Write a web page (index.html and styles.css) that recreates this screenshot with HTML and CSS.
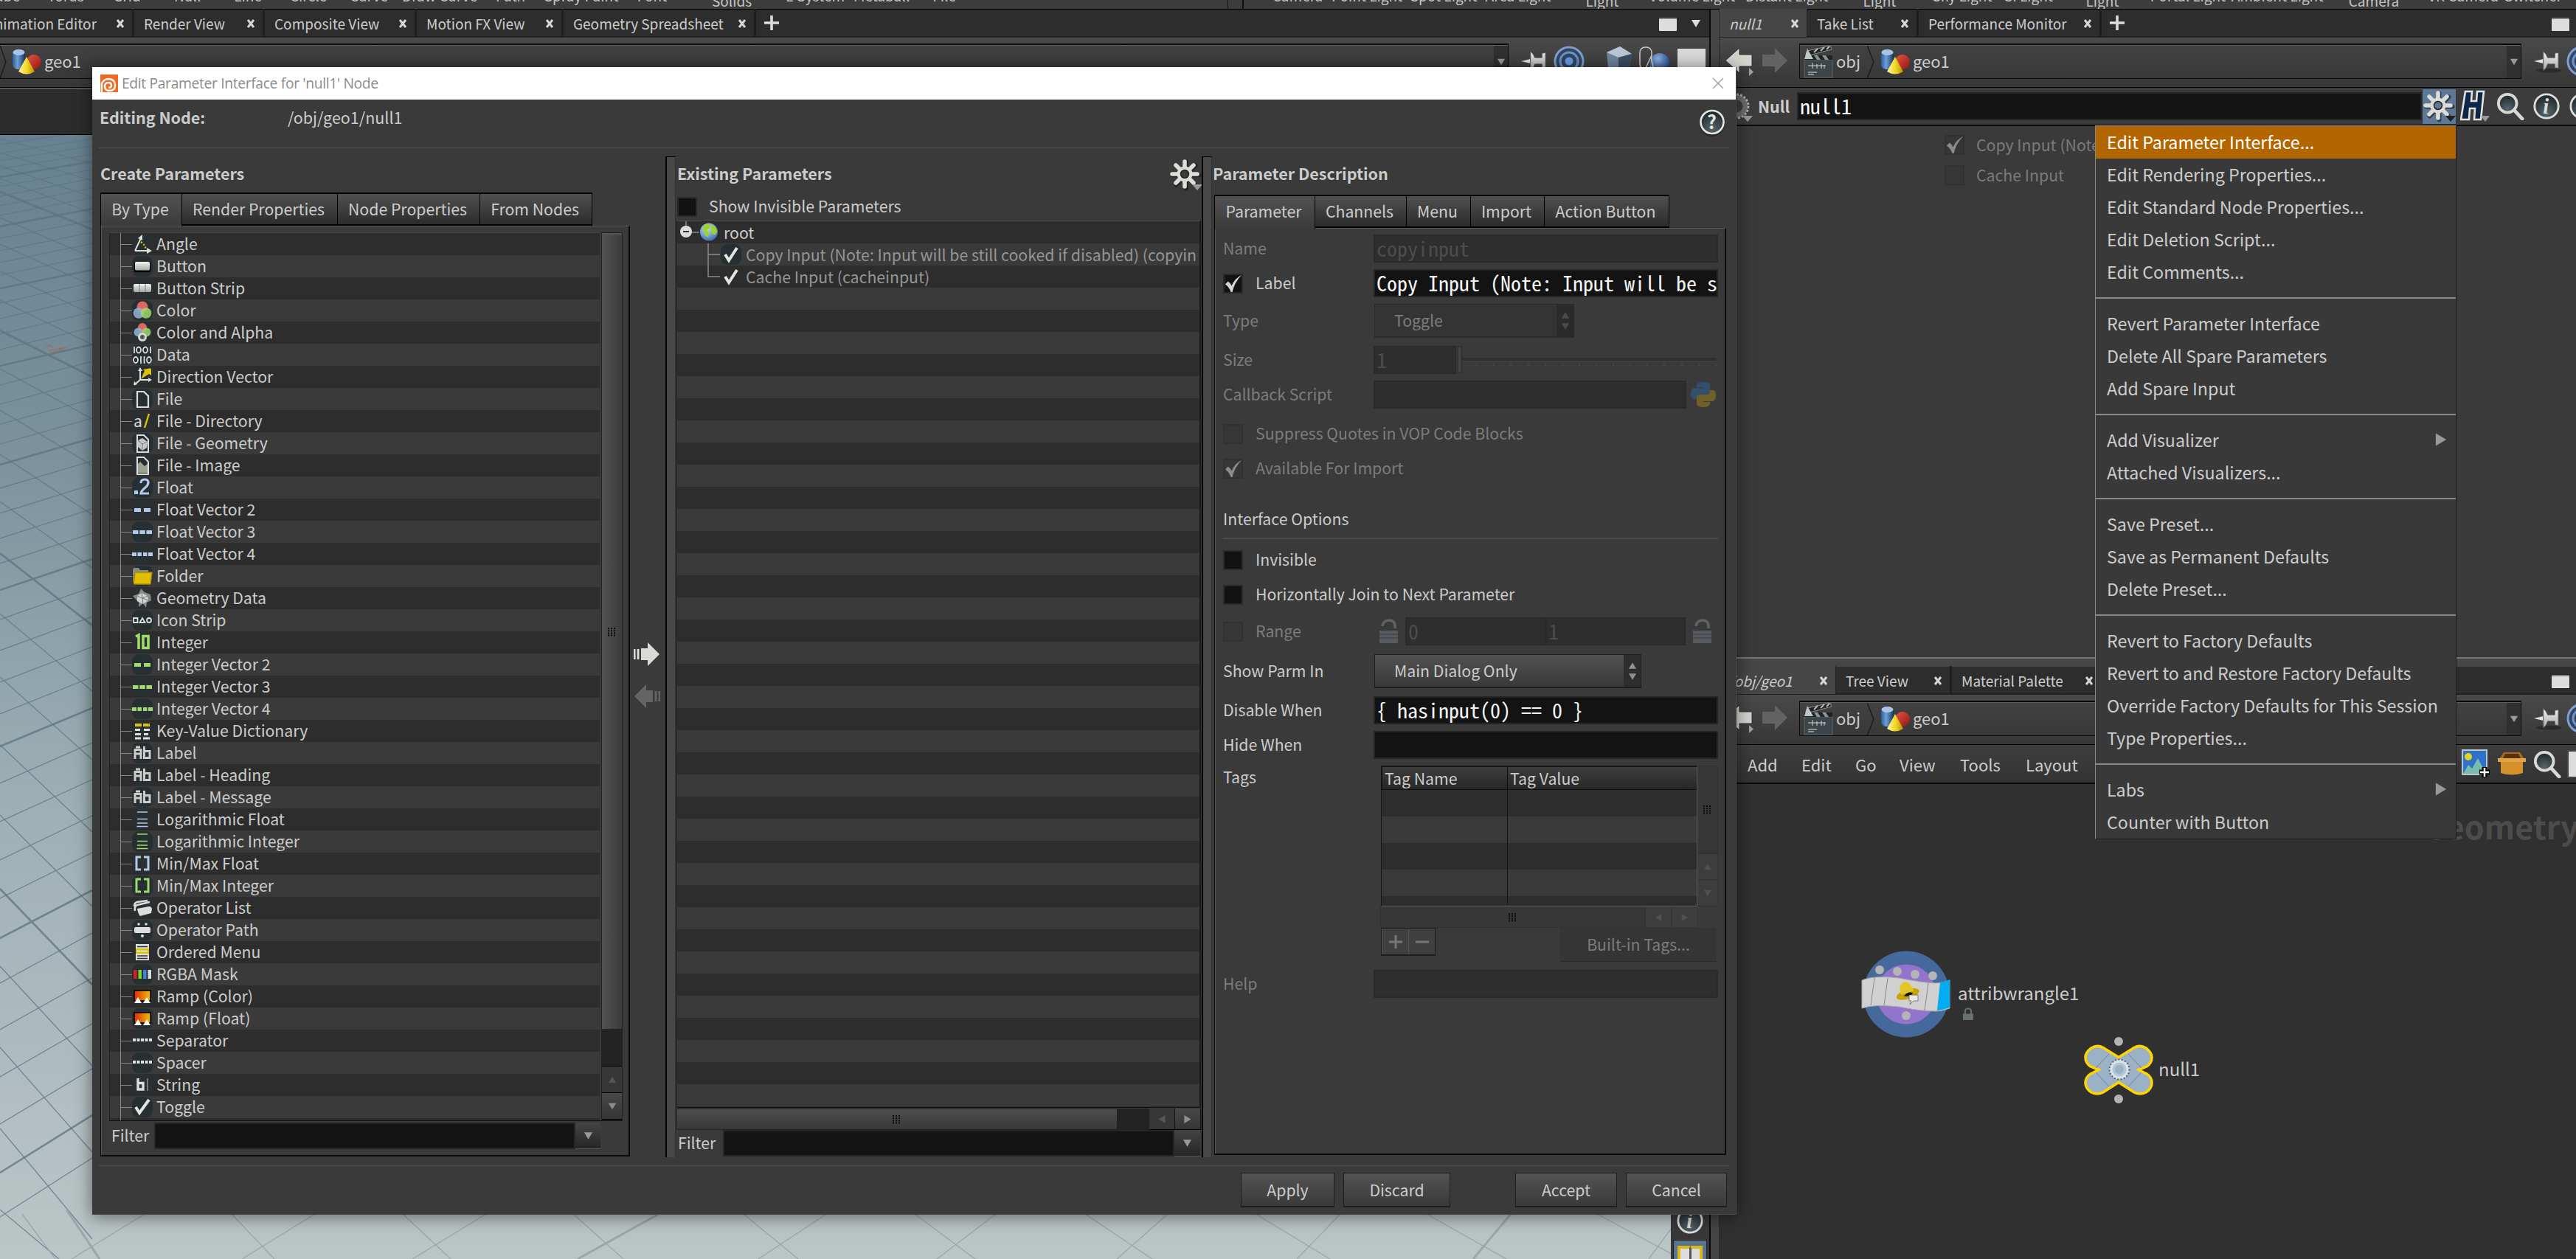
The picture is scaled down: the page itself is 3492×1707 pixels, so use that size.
FILE: index.html
```html
<!DOCTYPE html>
<html lang="en">
<head>
<meta charset="utf-8">
<title>Edit Parameter Interface</title>
<link rel="stylesheet" href="styles.css">
</head>
<body>
<svg class="defs" aria-hidden="true">
  <defs>
    <linearGradient id="gMetal" x1="0" y1="0" x2="0" y2="1"><stop offset="0" stop-color="#f2f2f0"/><stop offset="1" stop-color="#a9a9a6"/></linearGradient>
    <linearGradient id="gBlue" x1="0" y1="0" x2="1" y2="0"><stop offset="0" stop-color="#2d5d9c"/><stop offset=".4" stop-color="#6fa0d6"/><stop offset="1" stop-color="#16355f"/></linearGradient>
    <linearGradient id="gRed" x1="0" y1="0" x2="1" y2="1"><stop offset="0" stop-color="#e8574a"/><stop offset="1" stop-color="#8f1410"/></linearGradient>
    <linearGradient id="gYel" x1="0" y1="0" x2="1" y2="0"><stop offset="0" stop-color="#fff3a0"/><stop offset=".5" stop-color="#f4d928"/><stop offset="1" stop-color="#b89300"/></linearGradient>
    <linearGradient id="gRamp" x1="0" y1="0" x2="1" y2="0"><stop offset="0" stop-color="#e02a08"/><stop offset="1" stop-color="#efc20a"/></linearGradient>
    <radialGradient id="gBall" cx=".4" cy=".3" r=".7"><stop offset="0" stop-color="#8fb6e6"/><stop offset="1" stop-color="#1b4584"/></radialGradient>
    <radialGradient id="gGlass" cx=".5" cy=".8" r=".8"><stop offset="0" stop-color="#56666c"/><stop offset="1" stop-color="#1c2427"/></radialGradient>
    <radialGradient id="gGlobe" cx=".4" cy=".3" r=".8"><stop offset="0" stop-color="#cfe0f2"/><stop offset="1" stop-color="#2a62b0"/></radialGradient>
  </defs>
  <symbol id="close" viewBox="0 0 12 12"><path d="M2 1l8 10M10 1L2 11" stroke="#d6d6d6" stroke-width="3" fill="none"/></symbol>
  <symbol id="plus" viewBox="0 0 20 20"><path d="M10 0v20M0 10h20" stroke="#dcdcdc" stroke-width="3.6"/></symbol>
  <symbol id="down" viewBox="0 0 14 12"><path d="M1 1h12L7 11z" fill="currentColor"/></symbol>
  <symbol id="up" viewBox="0 0 14 12"><path d="M1 11h12L7 1z" fill="currentColor"/></symbol>
  <symbol id="right" viewBox="0 0 12 14"><path d="M1 1v12L11 7z" fill="currentColor"/></symbol>
  <symbol id="left" viewBox="0 0 12 14"><path d="M11 1v12L1 7z" fill="currentColor"/></symbol>
  <symbol id="maxi" viewBox="0 0 24 18"><rect width="24" height="18" rx="1" fill="#dddddb"/><path d="M0 1h24" stroke="#23292b" stroke-width="1"/></symbol>
  <symbol id="geo" viewBox="0 0 40 36"><rect x="1" y="1" width="17" height="27" rx="7" fill="url(#gBlue)"/><ellipse cx="9.500" cy="5" rx="8" ry="4" fill="#a9c4e6"/><circle cx="30" cy="18" r="10" fill="url(#gRed)"/><path d="M20 11L31 31q-11 7-22 0z" fill="url(#gYel)"/></symbol>
  <symbol id="clap" viewBox="0 0 40 44"><rect x="1" y="19" width="38" height="24" fill="#3d4548" stroke="#59656a"/><path d="M1 13h38v6H1z" fill="#1f2325"/><path d="M14 13l4 6h5l-4-6zM25 13l4 6h5l-4-6z" fill="#8e9494"/><path d="M3 12L5 7 36 0l2 5L8 13z" fill="#222" stroke="#8e9494"/><path d="M14 9l5-5M23 7l5-5M31 5l4-4" stroke="#bbb" stroke-width="2"/><path d="M1 18L5 4l8 14z" fill="#bfc6c7"/><path d="M6 27h24M12 23v8M18 25v6M24 24v7M28 26v5" stroke="#d5d5d5"/><path d="M6 36h12M6 39h8" stroke="#8d9394" stroke-width="2"/></symbol>
  <symbol id="navL" viewBox="0 0 40 40"><path d="M1 18L20 1v9h17v16H20v9z" fill="#d5d5d0" stroke="#2a3031"/><path d="M33 28v11l6-5.500z" fill="#a0a0a0"/></symbol>
  <symbol id="navR" viewBox="0 0 40 40"><path d="M37 18L20 1v9H3v16h17v9z" fill="#626363"/></symbol>
  <symbol id="pin" viewBox="0 0 40 34"><ellipse cx="22" cy="30" rx="18" ry="3" fill="#2b2b2b"/><path d="M1 17l13-3v6z" fill="#e4e4e4"/><path d="M14 3q5 5 6 9h10V6l5-1v22l-5-1v-5H20q-1 6-6 9z" fill="url(#gMetal)" stroke="#4c5254"/></symbol>
  <symbol id="radar" viewBox="0 0 42 42"><circle cx="21" cy="21" r="19" fill="#33455f" stroke="#7f9fce" stroke-width="3"/><circle cx="21" cy="21" r="12" fill="none" stroke="#6c93cc" stroke-width="3"/><circle cx="21" cy="21" r="5.500" fill="#6b9be6"/></symbol>
  <symbol id="gear" viewBox="0 0 44 44"><path d="M21.500 4.500v36M3.500 22.500h36M8.500 9.500l26 26M34.500 9.500l-26 26" stroke="#151515" opacity=".6" stroke-linecap="round" stroke-width="6"/><path d="M20 4v34M3 21h34M8 9l24 24M32 9L8 33" stroke="#dcdcd8" stroke-width="5.600" stroke-linecap="round"/><circle cx="20" cy="21" r="10.500" fill="#dcdcd8"/><circle cx="20" cy="21" r="5.500" fill="var(--hole,#3a3a3a)" stroke="#222" stroke-width="1.500"/><path d="M30 35h14l-7 8z" fill="var(--tri,#999)"/></symbol>
  <symbol id="mag" viewBox="0 0 40 40"><path d="M24 24l13 14" stroke="#d8d8d4" stroke-width="5" stroke-linecap="round"/><circle cx="16" cy="16" r="13" fill="url(#gGlass)" stroke="#d8d8d4" stroke-width="4"/></symbol>
  <symbol id="arrow" viewBox="0 0 36 32"><path d="M1 9v14M6 9v14" stroke="currentColor" stroke-width="3"/><path d="M10 8h9V0l16 16-16 16v-8h-9z" fill="currentColor"/></symbol>
  <symbol id="tick" viewBox="0 0 28 28"><path d="M3 15l4-4q3 2 5 6Q17 6 26 2 16 12 13 26h-2Q8 18 3 15z" fill="currentColor"/></symbol>
  <symbol id="lock" viewBox="0 0 28 34"><path d="M5 10q1-8 9-8 8 0 8 8v3" fill="none" stroke="#5e6266" stroke-width="3.600"/><path d="M1 16h25v17H1z" fill="#575b5f"/><path d="M1 21h25M1 26h25" stroke="#484c50" stroke-width="2"/></symbol>
  <symbol id="dots" viewBox="0 0 12 12"><path d="M1 0v12M5 0v12M9 0v12" stroke="#0a0a0a" stroke-width="2" stroke-dasharray="2 1.200"/></symbol>

  <symbol id="i-angle" viewBox="0 0 28 28"><path d="M4 23h18M4 23L12 6" stroke="#ddd" stroke-width="2" fill="none"/><path d="M20 19l7 4-7 4zM8 6l6-5v8z" fill="#ddd"/><path d="M12 11q6 4 7 11" stroke="#d8c20a" stroke-width="2.200" stroke-dasharray="2.200 2.200" fill="none"/></symbol>
  <symbol id="i-button" viewBox="0 0 28 28"><rect x="3" y="8" width="22" height="14" rx="2" fill="#000"/><rect x="4" y="8" width="20" height="11.500" rx="1.500" fill="url(#gMetal)"/></symbol>
  <symbol id="i-strip" viewBox="0 0 28 28"><rect x="2" y="8" width="24" height="11" rx="2" fill="url(#gMetal)"/><path d="M10 8v11M18 8v11" stroke="#777"/></symbol>
  <symbol id="i-color" viewBox="0 0 28 28"><circle cx="14" cy="9" r="7.500" fill="#e06666"/><circle cx="9" cy="17.500" r="7.300" fill="#93b0d6" fill-opacity=".88"/><circle cx="19" cy="17.500" r="7.300" fill="#a0d868" fill-opacity=".85"/></symbol>
  <symbol id="i-alpha" viewBox="0 0 28 28"><circle cx="14" cy="7" r="6" fill="#e06666"/><circle cx="8.500" cy="13.500" r="6" fill="#93b0d6" fill-opacity=".88"/><circle cx="19.500" cy="13.500" r="6" fill="#a0d868" fill-opacity=".85"/><circle cx="14" cy="20" r="6" fill="#d8d8d8"/><circle cx="14" cy="20" r="3" fill="#555"/></symbol>
  <symbol id="i-data" viewBox="0 0 28 28"><g fill="none" stroke="#ddd" stroke-width="1.800"><path d="M3 3v9M25 3v9M12 16v10M16.500 16v10"/><ellipse cx="9" cy="7.500" rx="3" ry="4"/><ellipse cx="18" cy="7.500" rx="3" ry="4"/><ellipse cx="5" cy="21" rx="3" ry="4"/><ellipse cx="23" cy="21" rx="3" ry="4"/></g></symbol>
  <symbol id="i-dir" viewBox="0 0 28 28"><path d="M11 18V5M11 18h12M11 18L4 24" stroke="#ddd" stroke-width="2"/><path d="M8 6l3-5 3 5zM22 15l5 3-5 3zM2 26l1-6 4 4z" fill="#ddd"/><path d="M12 17L17 6l-2-2 11-2v10l-3-2z" fill="#d8c20a"/></symbol>
  <symbol id="i-file" viewBox="0 0 28 28"><path d="M7 4h9l6 6v15H7z" fill="none" stroke="#ddd" stroke-width="2.200"/></symbol>
  <symbol id="i-adir" viewBox="0 0 28 28"><text x="2" y="22" font-size="21" fill="#ddd">a</text><path d="M17 23L23 4" stroke="#d8c20a" stroke-width="2.400"/></symbol>
  <symbol id="i-fgeo" viewBox="0 0 28 28"><path d="M7 3h9l6 6v17H7z" fill="none" stroke="#ddd" stroke-width="2"/><path d="M8 10l6-3 7 5-1 8-6 4-6-5z" fill="#c6c6c6"/><path d="M14 15L8 10M14 15l7-3M14 15v8" stroke="#777"/></symbol>
  <symbol id="i-fimg" viewBox="0 0 28 28"><path d="M8 12l3-3 6 6 4-3v12H8z" fill="#9aa391"/><path d="M7 3h9l6 6v17H7z" fill="none" stroke="#ddd" stroke-width="2"/></symbol>
  <symbol id="i-float" viewBox="0 0 28 28"><path d="M3 18h5v5H3z" fill="#b3caea"/><path d="M12 8q0-5 5-5t5 4q0 4-4 7-6 5-6 8h11" fill="none" stroke="#b3caea" stroke-width="3.200"/></symbol>
  <symbol id="i-v2" viewBox="0 0 28 28"><path d="M3 12h9v5H3zM16 12h9v5h-9z" fill="currentColor"/></symbol>
  <symbol id="i-v3" viewBox="0 0 28 28"><path d="M1 12h7.500v5H1zM10.300 12h7.500v5h-7.500zM19.500 12H27v5h-7.500z" fill="currentColor"/></symbol>
  <symbol id="i-v4" viewBox="0 0 28 28"><path d="M0 12h6v5H0zM7.500 12h5.500v5H7.500zM15 12h5.500v5H15zM22 12h6v5h-6z" fill="currentColor"/></symbol>
  <symbol id="i-folder" viewBox="0 0 28 28"><path d="M1 3h8l2 3h11v16H1z" fill="#8a8a8a"/><path d="M4 9h23l-2 16H2z" fill="#e0bd00" stroke="#a88700" stroke-width="1.500"/></symbol>
  <symbol id="i-gdata" viewBox="0 0 28 28"><path d="M1 11l8-3 3-7 5 5 8 3 1 8-6 3-1 7-4-6-6 5V20z" fill="#888"/><path d="M7 11l6-4 8 4 1 6-7 5-8-4z" fill="#d2d2d2"/><path d="M14 14L7 11M14 14l7-3M14 14l1 8M14 14l-1-7M14 14l8 3" stroke="#777"/></symbol>
  <symbol id="i-icons" viewBox="0 0 28 28"><g fill="none" stroke="#ddd" stroke-width="1.800"><path d="M2 11h5.500v6H2zM10.500 17L14 11l3.500 6z"/><circle cx="23" cy="14" r="3"/></g></symbol>
  <symbol id="i-int" viewBox="0 0 28 28"><path d="M5 6l4-2v19M15 5.500h7v16h-7z" fill="none" stroke="#9fdb6b" stroke-width="3.600"/></symbol>
  <symbol id="i-kv" viewBox="0 0 28 28"><path d="M4 4h9v4H4zM15 4h9v4h-9z" fill="#d8c20a"/><path d="M4 11h7v3H4zM4 17h8v3H4zM4 22.500h8v3H4zM16 11h8v3h-8zM16 17h6v3h-6zM15 22.500h9v3h-9z" fill="#ddd"/></symbol>
  <symbol id="i-ab" viewBox="0 0 28 28"><path d="M4 22V9.500h8V22M4 15h8M5 6h6M16.500 5v15.500H24v-9h-7.500" fill="none" stroke="#c9ccc8" stroke-width="3"/></symbol>
  <symbol id="i-log" viewBox="0 0 28 28"><path d="M7 4h14M7 13.500h14M7 19h14M6.500 23.500h15" stroke="currentColor" stroke-width="1.600"/></symbol>
  <symbol id="i-mm" viewBox="0 0 28 28"><path d="M12 5H6v17h6M16 5h6v17h-6" fill="none" stroke="currentColor" stroke-width="3"/></symbol>
  <symbol id="i-oplist" viewBox="0 0 28 28"><path d="M7 15l16-3q3 0 4 3l-1 6-15 4q-3-3-4-10z" fill="#ddd"/><path d="M4 18q-1-7 3-8l17-4M3 12q0-5 4-6l14-2" fill="none" stroke="#ddd" stroke-width="2.600"/></symbol>
  <symbol id="i-oppath" viewBox="0 0 28 28"><rect x="3" y="10" width="22" height="8" rx="2" fill="#ddd"/><circle cx="9" cy="6" r="1.800" fill="#ddd"/><circle cx="19" cy="6" r="1.800" fill="#ddd"/><circle cx="14" cy="22" r="2" fill="#ddd"/></symbol>
  <symbol id="i-menu" viewBox="0 0 28 28"><path d="M5 3h18v22H5z" fill="#ddd"/><path d="M5 9h18v7H5z" fill="#d8c20a"/><path d="M7 6.500h14M7 19h14M7 22.500h14" stroke="#333" stroke-width="1.600"/><path d="M7 12.500h14" stroke="#fff" stroke-width="1.500"/></symbol>
  <symbol id="i-rgba" viewBox="0 0 28 28"><path d="M2 8h4.500v12H2z" fill="#d82020"/><path d="M8.500 8H13v12H8.500z" fill="#7ad820"/><path d="M15 8h4.500v12H15z" fill="#3d86e0"/><path d="M21.500 8H26v12h-4.500z" fill="#ddd"/></symbol>
  <symbol id="i-ramp" viewBox="0 0 28 28"><path d="M3 6h22v14H3z" fill="url(#gRamp)" stroke="#000" stroke-width="1.500"/><path d="M3 23l5-8 5 8zM15 23l5-8 5 8z" fill="#fff"/></symbol>
  <symbol id="i-sep" viewBox="0 0 28 28"><path d="M1 13h26" stroke="#ddd" stroke-width="4" stroke-dasharray="4 1.500"/></symbol>
  <symbol id="i-str" viewBox="0 0 28 28"><path d="M8 5v15h7v-8.500H8" fill="none" stroke="#ddd" stroke-width="3.400"/><path d="M21 5v17" stroke="#777" stroke-width="2"/></symbol>
  <symbol id="i-tog" viewBox="0 0 28 28"><path d="M5 14l5 8L23 4" fill="none" stroke="#e4e4e0" stroke-width="4"/></symbol>
</svg>

<div class="screen">
  <div class="shelves">
    <div class="shelf shelf-l"><span>Tube</span><span>Torus</span><span>Grid</span><span>Null</span><span>Line</span><span>Circle</span><span>Curve</span><span>Draw Curve</span><span>Path</span><span>Spray Paint</span><span>Font</span><span class="low">Solids</span><span>L-System</span><span>Metaball</span><span>File</span></div>
    <div class="shelf shelf-r"><span>Camera</span><span>Point Light</span><span>Spot Light</span><span>Area Light</span><span class="low">Light</span><span>Volume Light</span><span>Distant Light</span><span class="low">Light</span><span>Sky Light</span><span>GI Light</span><span class="low">Light</span><span>Portal Light</span><span>Ambient Light</span><span class="low">Camera</span><span>VR Camera</span><span>Switcher</span></div>
  </div>
  <div class="panes">
    <section class="pane pane-l">
      <nav class="tabs tabs-l">
        <div class="tab first"><span>Animation Editor</span><svg class="x"><use href="#close"/></svg></div>
        <div class="tab"><span>Render View</span><svg class="x"><use href="#close"/></svg></div>
        <div class="tab"><span>Composite View</span><svg class="x"><use href="#close"/></svg></div>
        <div class="tab"><span>Motion FX View</span><svg class="x"><use href="#close"/></svg></div>
        <div class="tab"><span>Geometry Spreadsheet</span><svg class="x"><use href="#close"/></svg></div>
        <svg class="add"><use href="#plus"/></svg>
        <svg class="maxi"><use href="#maxi"/></svg><svg class="tri"><use href="#down"/></svg>
      </nav>
      <div class="pathrow">
        <div class="pathbar bar-l"><svg class="chev" viewBox="0 0 10 46"><path d="M0 0l8 23-8 23" fill="none" stroke="#1c1c1c" stroke-width="1.500"/></svg><svg class="geo"><use href="#geo"/></svg><span>geo1</span><b class="dd"><svg><use href="#down"/></svg></b></div>
        <svg class="pin"><use href="#pin"/></svg><svg class="radar"><use href="#radar"/></svg>
        <svg class="cube" viewBox="0 0 36 40"><path d="M1 8l18-8 16 10-5 30H4z" fill="#6f859a"/><path d="M1 8l18-8 16 10-18 5z" fill="#b9c7d6"/><path d="M17 15l18-5-5 30H17z" fill="#3c4d60"/></svg>
        <svg class="shape" viewBox="0 0 42 40"><rect x="1" y="1" width="16" height="30" rx="7" fill="none" stroke="#ccc" stroke-width="1.500"/><circle cx="28" cy="22" r="13" fill="url(#gBall)"/><path d="M16 14L5 38h16z" fill="none" stroke="#ccc" stroke-width="1.500"/></svg>
        <i class="white"></i>
      </div>
      <div class="opbar"></div>
      <div class="view">
        <svg class="grid" viewBox="0 183 2265 1524" preserveAspectRatio="none">
          <g stroke="#5f7682" stroke-width="1.200" fill="none" opacity=".8">
            <path d="M0 196l125-19M0 208l125-20M0 218l125-20M0 229l125-20M0 253l125-23M0 266l125-24M0 279l125-24M0 292l125-24M0 323l125-24M0 340l125-25M0 356l125-26M0 373l125-26M0 411l125-28M0 432l125-29M0 453l125-30M0 474l125-30M0 522l125-32M0 548l125-33M0 575l125-34M0 602l125-35M0 662l125-37M0 696l125-39M0 730l125-40M0 764l125-41M0 840l125-44M0 882l125-46M0 925l125-48M0 968l125-50M0 1062l125-55M0 1114l125-57M0 1166l125-60M0 1218l125-62M0 1333l125-68M0 1396l125-70M0 1460l125-72M0 1524l125-75M0 1650l125-80"/>
            <path d="M0 188l125 34M0 207l125 38M0 225l125 42M0 242l125 47M0 295l125 54M0 331l125 56M0 368l125 58M0 407l125 60M0 500l125 68M0 556l125 75M0 616l125 82M0 680l125 90M0 832l125 105M0 918l125 112M0 1010l125 118M0 1105l125 124M0 1310l125 135M0 1420l125 142M0 1530l125 150M0 1640l80 67"/>
          </g>
          <g stroke="#5c7380" stroke-width="2.600" fill="none" opacity=".75">
            <path d="M0 240l125-21M0 307l125-24M0 391l125-25M0 496l125-29M0 630l125-36M0 800l125-42M0 1012l125-52M0 1272l125-65M0 1590l125-78M0 260l125 51M0 448l125 63M0 750l125 98M0 1205l125 130"/>
          </g>
          <g stroke="#9ba6ab" stroke-width="1.300" fill="none">
            <path d="M97 1707l99-61M328 1707l99-61M559 1707l100-61M1028 1707l92-61M1270 1707l80-61M1514 1707l69-61M1758 1707l59-61M2235 1707l45-61"/>
            <path d="M314 1646l58 61M546 1646l65 61M777 1646l68 61M1008 1646l74 61M1240 1646l82 61M1471 1646l91 61M1702 1646l101 61M1934 1646l108 61M2165 1646l114 61M30 1646l45 61"/>
            <path d="M783 1707l110-61M1997 1707l51-61M90 1640l45 67" stroke-width="3"/>
          </g>
          <path d="M62 470l6-2 3 3M68 475l22-4-12 5-8 2z" fill="none" stroke="#97706e" stroke-width="1.500"/>
        </svg>
        <div class="vtools"><svg class="info" viewBox="0 0 40 40"><circle cx="20" cy="20" r="17" fill="url(#gGlass)" stroke="#ddd" stroke-width="3"/><text x="15" y="30" font-size="30" font-style="italic" font-family="Liberation Serif, serif" font-weight="bold" fill="#ddd">i</text></svg>
          <div class="layout"><i></i><i></i></div></div>
      </div>
    </section>
    <i class="split"></i>
    <section class="pane pane-r">
      <nav class="tabs tabs-r">
        <div class="tab on"><em>null1</em><svg class="x"><use href="#close"/></svg></div>
        <div class="tab"><span>Take List</span><svg class="x"><use href="#close"/></svg></div>
        <div class="tab"><span>Performance Monitor</span><svg class="x"><use href="#close"/></svg></div>
        <svg class="add"><use href="#plus"/></svg>
        <svg class="maxi"><use href="#maxi"/></svg>
      </nav>
      <div class="pathrow">
        <svg class="nav"><use href="#navL"/></svg><svg class="nav"><use href="#navR"/></svg>
        <div class="pathbar bar-r"><svg class="clap"><use href="#clap"/></svg><span>obj</span><svg class="chev" viewBox="0 0 10 46"><path d="M0 0l9 23-9 23" fill="none" stroke="#1c1c1c" stroke-width="1.500"/></svg><svg class="geo"><use href="#geo"/></svg><span>geo1</span><b class="dd"><svg><use href="#down"/></svg></b></div>
        <svg class="pin"><use href="#pin"/></svg><svg class="radar"><use href="#radar"/></svg>
      </div>
      <div class="nullrow">
        <svg class="ring" viewBox="0 0 42 42"><circle cx="19" cy="21" r="12" fill="none" stroke="#6c6c6c" stroke-width="7"/><circle cx="19" cy="21" r="16" fill="none" stroke="#aaa" stroke-width="3" stroke-dasharray="3 2"/><path d="M27 34h14l-7 8z" fill="#999"/></svg>
        <b>Null</b><div class="nullin">null1</div>
        <div class="gearbtn"><svg><use href="#gear"/></svg></div>
        <svg class="hh" viewBox="0 0 40 44"><path d="M7 2h9l-1 13h7l1-13h9l-4 38h-9l1-15h-7l-1 15H1z" fill="#0c2748" stroke="#e2e2de" stroke-width="2.600"/><path d="M28 35h12l-6 8z" fill="#999"/></svg>
        <svg class="mg"><use href="#mag"/></svg>
        <svg class="info" viewBox="0 0 40 40"><circle cx="20" cy="20" r="17" fill="url(#gGlass)" stroke="#ddd" stroke-width="3"/><text x="15" y="30" font-size="30" font-style="italic" font-family="Liberation Serif, serif" font-weight="bold" fill="#ddd">i</text></svg>
        <svg class="info" viewBox="0 0 40 40"><circle cx="20" cy="20" r="17" fill="url(#gGlass)" stroke="#ddd" stroke-width="3"/></svg>
      </div>
      <div class="parms">
        <div class="prow"><i class="cb off"><svg><use href="#tick"/></svg></i>Copy Input (Note</div>
        <div class="prow"><i class="cb off"></i>Cache Input</div>
      </div>
      <i class="hsplit"></i>
      <nav class="tabs tabs-b">
        <div class="tab on"><em>/obj/geo1</em><svg class="x"><use href="#close"/></svg></div>
        <div class="tab"><span>Tree View</span><svg class="x"><use href="#close"/></svg></div>
        <div class="tab"><span>Material Palette</span><svg class="x"><use href="#close"/></svg></div>
        <svg class="maxi"><use href="#maxi"/></svg>
      </nav>
      <div class="pathrow">
        <svg class="nav"><use href="#navL"/></svg><svg class="nav"><use href="#navR"/></svg>
        <div class="pathbar bar-r"><svg class="clap"><use href="#clap"/></svg><span>obj</span><svg class="chev" viewBox="0 0 10 46"><path d="M0 0l9 23-9 23" fill="none" stroke="#1c1c1c" stroke-width="1.500"/></svg><svg class="geo"><use href="#geo"/></svg><span>geo1</span><b class="dd"><svg><use href="#down"/></svg></b></div>
        <svg class="pin"><use href="#pin"/></svg><svg class="radar"><use href="#radar"/></svg>
      </div>
      <div class="netmenu"><span>Add</span><span>Edit</span><span>Go</span><span>View</span><span>Tools</span><span>Layout</span>
        <div class="nicons">
          <svg class="img" viewBox="0 0 40 40"><rect x="1" y="1" width="33" height="33" fill="#2f72c8" stroke="#b9c6cc" stroke-width="2"/><circle cx="9" cy="10" r="5" fill="#e8d320"/><path d="M2 33l7-12 5 5 8-14 11 21z" fill="#78bcb0"/><path d="M31 24v14M24 31h14" stroke="#000" stroke-width="7"/><path d="M31 25v12M25 31h12" stroke="#fff" stroke-width="2.500"/></svg>
          <svg class="box" viewBox="0 0 40 34"><path d="M5 13h30v16q-15 5-30 0z" fill="#d6912d"/><path d="M9 1h22l8 12H1z" fill="#a9681a"/><path d="M11 3h18l3 6H8z" fill="#573408"/><path d="M1 9h38v5H1z" fill="#e0a24a"/></svg>
          <svg class="mg"><use href="#mag"/></svg>
          <i class="frame"></i>
        </div>
      </div>
      <div class="network">
        <strong class="ctx">Geometry</strong>
        <svg class="node wr" viewBox="0 0 122 122"><circle cx="61" cy="60" r="58.500" fill="#46699b"/><circle cx="61" cy="60" r="40.500" fill="#9374cd"/><path d="M1 41q17-7 50-3 36 7 50 7 10 0 19-4v38q-10 4-19 4-20 0-50-6-33-4-50 2z" fill="#d0d0d0" stroke="#aaa"/><path d="M107 44q7-1 13-4v38q-8 3-17 4z" fill="#00adf2"/><path d="M18 38l-5 37M36 38l-5 37M91 45l-5 37" stroke="#888" fill="none"/><g fill="#b4b4b4"><circle cx="25" cy="27" r="6"/><circle cx="49" cy="29" r="6"/><circle cx="73" cy="33" r="6"/><circle cx="97" cy="35" r="6"/><circle cx="61" cy="89" r="6"/></g><g transform="rotate(-18 62 56)"><ellipse cx="62" cy="60" rx="16" ry="6.500" fill="#c9a400"/><path d="M53 58q0-15 9-15 8 0 9 15z" fill="#e5c62a"/><path d="M56 61q8-5 13 0-6 4-13 0z" fill="#111"/></g><path d="M65 61h12v8h-6l-5 5 2-5h-3z" fill="#e8e8e4" stroke="#555" stroke-width=".7"/></svg>
        <span class="nlabel l1">attribwrangle1</span>
        <svg class="node lk" viewBox="0 0 16 18"><path d="M4 9V5q0-3.500 4-3.500T12 5v4" fill="none" stroke="#66706e" stroke-width="2.200"/><path d="M1 8.500h14V17H1z" fill="#66706e"/></svg>
        <svg class="node nu" viewBox="0 0 94 92"><g fill="#b4b4b4"><circle cx="47" cy="7" r="6"/><circle cx="47" cy="85" r="6"/></g><path id="nullbody" d="M47 28.500L68 15.500Q76 11 84 16q8 6.500 8 12.500 0 8-7 12.500L74 45.500 85 51q7 4.500 7 12 0 8-8 13-8 4-16 0L47 62.500 26 76q-8 4-16 0-8-5-8-13 0-7.500 7-12l11-5.500L9 41Q2 36.500 2 28.500 2 22 10 16q8-5 16-.5z" fill="#9bb2c6" stroke="#ffd400" stroke-width="3.600"/><path d="M34 24L16 43M60 24l18 19M16 49l18 19M78 49L60 68" stroke="#6f8799"/><circle cx="48" cy="45" r="11.500" fill="#b4c6d6" stroke="#d9e2ea" stroke-width="4"/><circle cx="48" cy="45" r="13.500" fill="none" stroke="#5a5f66" stroke-width="2" stroke-dasharray="2 2.400"/><circle cx="48" cy="45" r="6" fill="#9bb2c6"/></svg>
        <span class="nlabel l2">null1</span>
      </div>
    </section>
  </div>

  <section class="dialog">
    <header class="title"><svg viewBox="0 0 24 24"><path d="M0 0h24v24H0z" fill="#f26a21"/><path d="M2 24V12q3-6 9-6 9 0 9 9 0 7-8 7-6 0-6-6 0-5 5-5 4 0 4 4 0 3-4 3" fill="none" stroke="#fff" stroke-width="2.400"/></svg><span>Edit Parameter Interface for 'null1' Node</span><svg class="tx" viewBox="0 0 16 16"><path d="M1 1l14 14M15 1L1 15" stroke="#999" stroke-width="1.200"/></svg></header>
    <div class="head"><b>Editing Node:</b><span>/obj/geo1/null1</span><svg class="help" viewBox="0 0 36 38"><circle cx="18" cy="20" r="17" fill="#1b1b1b" opacity=".5"/><circle cx="18" cy="17.500" r="15.500" fill="url(#gGlass)" stroke="#e6e6e2" stroke-width="2.600"/><text x="11" y="27" font-size="25" font-weight="bold" fill="#e6e6e2">?</text></svg></div>
    <i class="rule"></i>
    <div class="cols">
      <div class="create">
        <h2>Create Parameters</h2>
        <div class="ptabs pl"><span class="on">By Type</span><span>Render Properties</span><span>Node Properties</span><span>From Nodes</span></div>
        <div class="pbox cbox">
          <div class="treewrap">
            <ul class="tree">
              <li><svg><use href="#i-angle"/></svg>Angle</li>
              <li><svg><use href="#i-button"/></svg>Button</li>
              <li><svg><use href="#i-strip"/></svg>Button Strip</li>
              <li><svg><use href="#i-color"/></svg>Color</li>
              <li><svg><use href="#i-alpha"/></svg>Color and Alpha</li>
              <li><svg><use href="#i-data"/></svg>Data</li>
              <li><svg><use href="#i-dir"/></svg>Direction Vector</li>
              <li><svg><use href="#i-file"/></svg>File</li>
              <li><svg><use href="#i-adir"/></svg>File - Directory</li>
              <li><svg><use href="#i-fgeo"/></svg>File - Geometry</li>
              <li><svg><use href="#i-fimg"/></svg>File - Image</li>
              <li><svg><use href="#i-float"/></svg>Float</li>
              <li><svg class="fl"><use href="#i-v2"/></svg>Float Vector 2</li>
              <li><svg class="fl"><use href="#i-v3"/></svg>Float Vector 3</li>
              <li><svg class="fl"><use href="#i-v4"/></svg>Float Vector 4</li>
              <li><svg><use href="#i-folder"/></svg>Folder</li>
              <li><svg><use href="#i-gdata"/></svg>Geometry Data</li>
              <li><svg><use href="#i-icons"/></svg>Icon Strip</li>
              <li><svg><use href="#i-int"/></svg>Integer</li>
              <li><svg class="in"><use href="#i-v2"/></svg>Integer Vector 2</li>
              <li><svg class="in"><use href="#i-v3"/></svg>Integer Vector 3</li>
              <li><svg class="in"><use href="#i-v4"/></svg>Integer Vector 4</li>
              <li><svg><use href="#i-kv"/></svg>Key-Value Dictionary</li>
              <li><svg><use href="#i-ab"/></svg>Label</li>
              <li><svg><use href="#i-ab"/></svg>Label - Heading</li>
              <li><svg><use href="#i-ab"/></svg>Label - Message</li>
              <li><svg class="fl"><use href="#i-log"/></svg>Logarithmic Float</li>
              <li><svg class="in"><use href="#i-log"/></svg>Logarithmic Integer</li>
              <li><svg class="fl"><use href="#i-mm"/></svg>Min/Max Float</li>
              <li><svg class="in"><use href="#i-mm"/></svg>Min/Max Integer</li>
              <li><svg><use href="#i-oplist"/></svg>Operator List</li>
              <li><svg><use href="#i-oppath"/></svg>Operator Path</li>
              <li><svg><use href="#i-menu"/></svg>Ordered Menu</li>
              <li><svg><use href="#i-rgba"/></svg>RGBA Mask</li>
              <li><svg><use href="#i-ramp"/></svg>Ramp (Color)</li>
              <li><svg><use href="#i-ramp"/></svg>Ramp (Float)</li>
              <li><svg><use href="#i-sep"/></svg>Separator</li>
              <li><svg><use href="#i-sep"/></svg>Spacer</li>
              <li><svg><use href="#i-str"/></svg>String</li>
              <li><svg><use href="#i-tog"/></svg>Toggle</li>
            </ul>
            <div class="vbar"><div class="thumb"><svg class="dots"><use href="#dots"/></svg></div><i class="trough"></i><b class="dim"><svg><use href="#up"/></svg></b><b><svg><use href="#down"/></svg></b></div>
          </div>
          <div class="filter fl1"><label>Filter</label><i></i><b><svg><use href="#down"/></svg></b></div>
        </div>
      </div>
      <div class="arrows"><svg><use href="#arrow"/></svg><svg class="back"><use href="#arrow"/></svg></div>
      <i class="vsplit"></i>
      <div class="exist">
        <h2>Existing Parameters<svg class="gear"><use href="#gear"/></svg></h2>
        <div class="showinv"><i class="cb"></i>Show Invisible Parameters</div>
        <div class="elist">
          <div class="er root"><svg class="guide" viewBox="0 0 60 30"><path d="M13 0v15h18" stroke="#8a8a8a" fill="none" stroke-width="1.500"/><circle cx="13" cy="14" r="8" fill="#dcdcda"/><path d="M9 14h8" stroke="#333" stroke-width="2"/><circle cx="44" cy="14.500" r="12" fill="url(#gGlobe)"/><path d="M35 9q4-6 10-5l1 5-5 3 4 4-2 6-4-3q-1-5-4-10zM48 5q6 2 7 9l-3 5-4-3-1-5z" fill="#9ad626"/></svg>root</div>
          <div class="er"><svg class="guide" viewBox="0 0 90 30"><path d="M43 0v30M43 15h16" stroke="#8a8a8a" fill="none" stroke-width="1.500"/><rect x="60" y="1" width="28" height="28" rx="9" fill="#263033"/><path d="M66 15l5 8L82 6" fill="none" stroke="#e4e4e0" stroke-width="4"/></svg>Copy Input (Note: Input will be still cooked if disabled) (copyin</div>
          <div class="er"><svg class="guide" viewBox="0 0 90 30"><path d="M43 0v15h16" stroke="#8a8a8a" fill="none" stroke-width="1.500"/><path d="M66 15l5 8L82 6" fill="none" stroke="#e4e4e0" stroke-width="4"/></svg>Cache Input (cacheinput)</div>
        </div>
        <div class="hbar"><div class="hthumb"><svg class="dots"><use href="#dots"/></svg></div><i></i><b class="dim"><svg><use href="#left"/></svg></b><b><svg><use href="#right"/></svg></b></div>
        <div class="filter fl2"><label>Filter</label><i></i><b><svg><use href="#down"/></svg></b></div>
      </div>
      <i class="vsplit"></i>
      <div class="desc">
        <h2>Parameter Description</h2>
        <div class="ptabs pr"><span class="on">Parameter</span><span>Channels</span><span>Menu</span><span>Import</span><span>Action Button</span></div>
        <div class="pbox form">
          <div class="row dis r0"><label>Name</label><div class="in mono">copyinput</div></div>
          <div class="row"><label><i class="cb"><svg><use href="#tick"/></svg></i>Label</label><div class="in mono lit">Copy Input (Note: Input will be s</div></div>
          <div class="row dis r2"><label>Type</label><div class="sel s1">Toggle<b><svg><use href="#up"/></svg><svg><use href="#down"/></svg></b></div></div>
          <div class="row dis r3"><label>Size</label><div class="in mono small">1</div><svg class="slider" viewBox="0 0 355 38"><path d="M8 18h345" stroke="#2f2f2f" stroke-width="4"/><path d="M8 21h345" stroke="#444" stroke-width="1"/><path d="M28 24v4M51 24v4M74 24v4M98 24v4M121 24v4M144 24v4M167 24v4M190 24v4M213 24v4M236 24v4M259 24v4M282 24v4M306 24v4M329 24v4M352 24v4" stroke="#505050"/><rect x="2" y="1" width="5" height="35" fill="#444" stroke="#2a2a2a"/></svg></div>
          <div class="row dis"><label>Callback Script</label><div class="in cbk"></div><svg class="py" viewBox="0 0 36 36"><path d="M9 6q0-5 9-5t9 5v8q0 4-5 4h-8q-5 0-5 6H5q-4 0-4-7 0-8 6-8h11V8H9z" fill="#334f6e"/><path d="M27 30q0 5-9 5t-9-5v-8q0-4 5-4h8q5 0 5-6h4q4 0 4 7 0 8-6 8H18v1h9z" fill="#6f602b"/></svg></div>
          <div class="row dis r4"><label class="wide"><i class="cb off"></i>Suppress Quotes in VOP Code Blocks</label></div>
          <div class="row dis"><label class="wide"><i class="cb off"><svg><use href="#tick"/></svg></i>Available For Import</label></div>
          <div class="row r5"><label class="wide">Interface Options</label></div>
          <i class="frule"></i>
          <div class="row"><label class="wide"><i class="cb"></i>Invisible</label></div>
          <div class="row"><label class="wide"><i class="cb"></i>Horizontally Join to Next Parameter</label></div>
          <div class="row dis r6"><label><i class="cb off"></i>Range</label><svg class="lock"><use href="#lock"/></svg><div class="in mono half">0</div><div class="in mono half">1</div><svg class="lock lk2"><use href="#lock"/></svg></div>
          <div class="row r7"><label>Show Parm In</label><div class="sel s2">Main Dialog Only<b><svg><use href="#up"/></svg><svg><use href="#down"/></svg></b></div></div>
          <div class="row r3"><label>Disable When</label><div class="in mono lit">{ hasinput(0) == 0 }</div></div>
          <div class="row"><label>Hide When</label><div class="in mono lit"></div></div>
          <div class="row tags"><label>Tags</label>
            <div class="tagw">
              <div class="tagt">
                <div class="table"><div class="th"><span>Tag Name</span><span>Tag Value</span></div><div class="tb"><i></i></div></div>
                <div class="tv"><div><svg class="dots"><use href="#dots"/></svg></div><b><svg><use href="#up"/></svg></b><b><svg><use href="#down"/></svg></b></div>
              </div>
              <div class="tagh"><div><svg class="dots"><use href="#dots"/></svg></div><b><svg><use href="#left"/></svg></b><b><svg><use href="#right"/></svg></b></div>
              <div class="tagb"><div class="pm"><b><svg viewBox="0 0 20 20"><path d="M10 1v18M1 10h18" stroke="#777" stroke-width="3"/></svg></b><b><svg viewBox="0 0 20 20"><path d="M1 10h18" stroke="#777" stroke-width="3"/></svg></b></div><div class="bit">Built-in Tags...</div></div>
            </div></div>
          <div class="row dis r3"><label>Help</label><div class="in"></div></div>
        </div>
      </div>
    </div>
    <i class="rule"></i>
    <footer><button class="b1">Apply</button><button class="b2">Discard</button><button class="b3">Accept</button><button class="b4">Cancel</button></footer>
  </section>

  <div class="menu">
    <div class="hl">Edit Parameter Interface...</div><div>Edit Rendering Properties...</div><div>Edit Standard Node Properties...</div><div>Edit Deletion Script...</div><div>Edit Comments...</div>
    <hr><div>Revert Parameter Interface</div><div>Delete All Spare Parameters</div><div>Add Spare Input</div>
    <hr><div>Add Visualizer<svg><use href="#right"/></svg></div><div>Attached Visualizers...</div>
    <hr><div>Save Preset...</div><div>Save as Permanent Defaults</div><div>Delete Preset...</div>
    <hr><div>Revert to Factory Defaults</div><div>Revert to and Restore Factory Defaults</div><div>Override Factory Defaults for This Session</div><div>Type Properties...</div>
    <hr><div>Labs<svg><use href="#right"/></svg></div><div>Counter with Button</div>
  </div>
</div>
</body>
</html>
```
FILE: styles.css
```css
* { box-sizing: border-box; }
html, body { margin: 0; height: 100%; overflow: hidden; background: #3a3a3a; }
body { font: 21.25px/30px "Noto Sans CJK SC", "Noto Sans", sans-serif; color: #ccc; white-space: nowrap; }
i { font-style: normal; display: block; }
svg { display: block; flex: none; }
b, h2, strong { font-weight: 700; }
.defs { position: absolute; width: 0; height: 0; }
.screen { position: relative; width: 3492px; height: 1707px; overflow: hidden; display: flex; flex-direction: column; }

/* shelves */
.shelves { display: flex; height: 13px; border-bottom: 1px solid #000; background: #3c3c3c; overflow: hidden; flex: none; }
.shelf { display: grid; font-size: 19px; line-height: 20px; color: #c4c4c4; }
.shelf span { display: flex; justify-content: center; margin-top: -16px; }
.shelf .low { margin-top: -9px; }
.shelf-l { width: 1665px; border-right: 1px solid #111; grid-template-columns: 47px 84px 82px 82px 82px 82px 82px 110px 82px 110px 82px 134px 92px 88px 82px; }
.shelf-l span:first-child { justify-content: flex-end; padding-right: 20px; }
.shelf-r { margin-left: 19px; border-left: 2px solid #111; padding-left: 26px; grid-template-columns: 94px 94px 114px 88px 140px 104px 152px 100px 124px 54px 148px 84px 158px 104px 138px 52px; }

/* panes */
.panes { display: flex; flex: 1; min-height: 0; }
.pane { display: flex; flex-direction: column; min-width: 0; }
.pane-l { width: 2317px; flex: none; }
.split { width: 14px; background: #454545; border-left: 2px solid #0c0c0c; border-right: 1px solid #2a2a2a; flex: none; }
.pane-r { flex: 1; }
.tabs { display: flex; height: 38px; background: #2d2d2d; border-bottom: 2px solid #232323; align-items: center; flex: none; font-size: 19px; }
.tab { display: flex; justify-content: space-between; align-items: center; height: 38px; padding: 2px 10px 0 13px; border-right: 3px solid #1f1f1f; flex: none; overflow: hidden; }
.tab.on { background: #464646; border-right: 1px solid #222; }
.tab .x { width: 12px; height: 12px; }
.tab.first { justify-content: flex-end; gap: 26px; }
.tabs-l .tab:nth-child(1) { width: 182px; }
.tabs-l .tab:nth-child(2) { width: 177px; }
.tabs-l .tab:nth-child(3) { width: 206px; }
.tabs-l .tab:nth-child(4) { width: 199px; }
.tabs-l .tab:nth-child(5) { width: 261px; }
.tabs-r .tab:nth-child(1) { width: 119px; }
.tabs-r .tab:nth-child(2) { width: 151px; }
.tabs-r .tab:nth-child(3) { width: 248px; }
.tabs-b .tab:nth-child(1) { width: 158px; }
.tabs-b .tab:nth-child(2) { width: 157px; }
.tabs-b .tab:nth-child(3) { width: 200px; padding-right: 5px; }
.add { width: 20px; height: 20px; margin-left: 11px; }
.maxi { width: 24px; height: 18px; margin-left: auto; margin-right: 9px; margin-top: 3px; }
.tri { width: 14px; height: 12px; color: #ddd; margin: 2px 11px 0 10px; }
.pathrow { display: flex; align-items: center; height: 68px; padding-bottom: 3px; background: linear-gradient(#4a4a4a, #373737); border-bottom: 1px solid #000; flex: none; }
.pathbar { display: flex; align-items: center; height: 48px; border: 1px solid #0b0b0b; border-top: 2px solid #0b0b0b; background: linear-gradient(#424242, #383838); box-shadow: inset 0 1px #606060; font-size: 22px; flex: none; }
.pathbar span { margin-top: -3px; }
.bar-l { width: 2045px; border-left: 0; }
.bar-r { width: 979px; margin-left: 5px; padding-left: 5px; }
.chev { width: 10px; height: 44px; }
.geo { width: 40px; height: 36px; margin: 0 4px 0 6px; }
.clap { width: 40px; height: 44px; margin-right: 4px; }
.bar-r .chev { margin: 0 2px 0 9px; }
.dd { margin-left: auto; width: 19px; height: 44px; display: grid; place-items: center; background: #303030; }
.dd svg { width: 12px; height: 12px; color: #999; }
.pin { width: 39px; height: 34px; margin-left: 16px; }
.radar { width: 42px; height: 42px; margin-left: 6px; }
.cube { width: 36px; height: 40px; margin-left: 29px; }
.shape { width: 42px; height: 40px; margin-left: 9px; }
.white { width: 38px; height: 34px; background: #dadad8; margin-left: 10px; }
.pane-r .pathrow { padding-left: 7px; }
.nav { width: 40px; height: 40px; margin: 2px 8px 0 0; }
.opbar { height: 64px; background: #2c2c2c; border-top: 2px solid #555; border-bottom: 1px solid #000; flex: none; }
.view { flex: 1; display: flex; background: linear-gradient(#668190, #7b929d 28%, #9eb0b5 60%, #bcc5c6); min-height: 0; }
.grid { width: 2265px; height: 1524px; }
.vtools { width: 52px; background: #383838; padding-top: 1453px; }
.vtools .info { width: 38px; height: 38px; margin-left: 7px; }
.layout { margin: 7px 0 0 3px; width: 46px; height: 40px; background: #5b7290; border: 1px solid #222; padding: 7px 5px; display: flex; }
.layout i { flex: 1; height: 40px; background: #ddd; border: 4px solid #d8b81c; }
.layout i + i { border-left: 2px solid #555; }
.layout i:first-child { border-right: 1px solid #555; }

.nullrow { display: flex; align-items: center; height: 52px; border-bottom: 2px solid #0a0a0a; background: #3c3c3c; flex: none; overflow: hidden; }
.ring { width: 42px; height: 42px; margin-left: 4px; }
.nullrow b { font-size: 21.5px; margin-left: 6px; width: 53px; flex: none; }
.nullin { width: 847px; height: 38px; background: #131313; border: 2px solid #252525; color: #fff; font: 28px/33px "Noto Sans Mono CJK SC", "DejaVu Sans Mono", monospace; padding-left: 2px; flex: none; }
.gearbtn { width: 47px; height: 49px; background: #5f7896; border: 1px solid #2a3442; display: grid; place-items: center; --hole: #5f7896; --tri: #222; flex: none; }
.gearbtn svg { width: 44px; height: 44px; }
.hh { width: 40px; height: 44px; margin-left: 5px; }
.mg { width: 38px; height: 38px; margin-left: 9px; }
.nullrow .info { width: 38px; height: 38px; margin-left: 11px; }
.parms { height: 720px; flex: none; background: #3a3a3a; padding: 4px 0 0 305px; color: #7a7a7a; overflow: hidden; }
.prow { display: flex; align-items: center; height: 41px; }
.cb { width: 27px; height: 27px; background: #121212; border: 2px solid #2a2a2a; margin-right: 16px; margin-top: 2px; flex: none; color: #d4d4d4; }
.cb svg { width: 27px; height: 27px; margin: -2px; }
.cb.off { background: #363636; border-color: #313131; color: #8c8c8c; }
.hsplit { height: 13px; background: #464646; border-top: 2px solid #777; flex: none; }
.netmenu { display: flex; align-items: center; height: 53px; background: linear-gradient(#3e3e3e, #333); border-bottom: 2px solid #0c0c0c; padding-left: 38px; font-size: 22px; flex: none; }
.netmenu span:nth-child(1) { width: 73px; }
.netmenu span:nth-child(2) { width: 73px; }
.netmenu span:nth-child(3) { width: 60px; }
.netmenu span:nth-child(4) { width: 82px; }
.netmenu span:nth-child(5) { width: 89px; }
.nicons { display: flex; align-items: center; margin-left: auto; }
.img { width: 40px; height: 40px; }
.box { width: 40px; height: 34px; margin-left: 8px; }
.frame { width: 12px; height: 38px; background: #ddd; border: 2px solid #444; border-right: 0; margin-left: 8px; }
.network { flex: 1; background: #303030; position: relative; overflow: hidden; }
.node, .nlabel, .ctx { position: absolute; }
.ctx { left: 954px; top: 26px; font-size: 43px; line-height: 60px; color: #4c4c4c; }
.wr { left: 192px; top: 225px; width: 122px; height: 122px; }
.nlabel { font-size: 24px; }
.l1 { left: 323px; top: 268px; }
.lk { left: 329px; top: 303px; width: 16px; height: 18px; }
.nu { left: 494px; top: 342px; width: 94px; height: 92px; }
.l2 { left: 595px; top: 371px; }

/* dialog */
.dialog { position: absolute; left: 125px; top: 91px; width: 2229px; height: 1556px; background: #3a3a3a; box-shadow: 0 2px 22px rgba(0,0,0,.5); display: flex; flex-direction: column; border-right: 1px solid #484848; border-bottom: 1px solid #484848; }
.title { height: 44px; background: #fff; color: #8c8c8c; display: flex; align-items: center; padding: 0 16px 0 11px; font: 19.3px/28px "Open Sans", sans-serif; flex: none; letter-spacing: -.35px; }
.title svg { width: 24px; height: 24px; margin-right: 5px; }
.title .tx { width: 16px; height: 16px; margin: 0 0 0 auto; }
.head { height: 65px; display: flex; padding: 9px 14px 0 10px; align-items: flex-start; font-size: 21.5px; flex: none; }
.head b { width: 255px; }
.help { width: 36px; height: 38px; margin-left: auto; margin-top: 4px; }
.rule { height: 1px; margin: 0 9px 1px; background: #505050; flex: none; }
.cols { display: flex; height: 1378px; padding: 10px 0 0 11px; flex: none; }
h2 { margin: 0; font-size: 21.5px; line-height: 30px; }
.create { width: 718px; padding-top: 8px; display: flex; flex-direction: column; }
.ptabs { display: flex; height: 45px; border-top: 2px solid #050505; width: max-content; flex: none; }
.ptabs span { border-right: 1px solid #000; border-bottom: 2px solid #000; background: linear-gradient(#505050, #2c2c2c); text-align: center; line-height: 40px; height: 43px; padding-right: 3px; }
.ptabs .on { background: linear-gradient(#525252, #3a3a3a); border-bottom: 0; border-left: 1px solid #000; height: 45px; }
.pl { margin-top: 11px; }
.pl span:nth-child(1) { width: 111px; } .pl span:nth-child(2) { width: 211px; } .pl span:nth-child(3) { width: 193px; } .pl span:nth-child(4) { width: 152px; }
.pbox { border: 2px solid #0a0a0a; border-top: 1px solid #5a5a5a; border-left-width: 1px; box-shadow: inset 1px 0 #555; }
.cbox { height: 1262px; padding: 8px 8px 0 11px; }
.treewrap { display: flex; height: 1205px; border-bottom: 1px solid #111; }
.tree { margin: 0 2px 0 0; padding: 0 0 2px; list-style: none; width: 665px; border-top: 1px solid #464646; border-left: 1px solid #222; flex: none; background: linear-gradient(#888, #888) 14px 0/1px 100% no-repeat, repeating-linear-gradient(#2d2d2d 0 30px, #3a3a3a 30px 60px); }
.tree li { height: 30px; padding-left: 30px; display: flex; align-items: flex-start; line-height: 28px; background: linear-gradient(#888, #888) 15px 15px/15px 1px no-repeat; }
.tree svg { width: 28px; height: 28px; margin: 1px 5px 0 0; border-radius: 9px; background: #2a2f31; }
.tree li:nth-child(even) svg { background: #263033; }
.fl { color: #b3caea; } .in { color: #9fdb6b; }
.vbar { width: 29px; display: flex; flex-direction: column; border: 1px solid #222; }
.thumb { height: 1080px; background: linear-gradient(90deg, #525252, #3c3c3c); display: grid; place-items: center; border-top: 2px solid #555; }
.dots { width: 12px; height: 12px; }
.trough { height: 51px; background: #232323; border-bottom: 1px solid #000; }
.vbar b, .hbar b { height: 36px; display: grid; place-items: center; background: linear-gradient(#484848, #353535); border-bottom: 1px solid #000; color: #8e8e8e; }
.vbar b svg { width: 12px; height: 12px; } .vbar .dim, .hbar .dim { color: #555; background: #363636; }
.filter { display: flex; align-items: center; height: 38px; }
.filter label { margin-top: -2px; }
.filter i { height: 36px; background: #131313; border: 2px solid #262626; }
.filter b { height: 36px; display: grid; place-items: center; background: linear-gradient(#444, #262626); border-bottom: 1px solid #555; color: #9a9a9a; }
.filter svg { width: 13px; height: 12px; }
.fl1 { padding-left: 3px; margin-top: 1px; } .fl1 label { width: 58px; } .fl1 i { width: 571px; } .fl1 b { width: 34px; }
.arrows { width: 48px; padding: 659px 0 0 5px; color: #dadad6; }
.arrows svg { width: 36px; height: 32px; }
.arrows .back { transform: scaleX(-1); color: #646464; margin-top: 25px; }
.vsplit { width: 14px; height: 1357px; background: #484848; border-left: 2px solid #000; border-top: 1px solid #000; border-right: 1px solid #303030; flex: none; }
.exist { width: 713px; padding: 8px 0 0 1px; }
.exist h2 { display: flex; padding-left: 1px; }
.gear { width: 44px; height: 44px; margin: -5px -1px -10px auto; }
.showinv { display: flex; align-items: center; height: 42px; margin: 8px 0 -1px 1px; }
.elist { height: 1203px; width: 711px; border-top: 1px solid #4a4a4a; border-left: 1px solid #1c1c1c; border-bottom: 1px solid #111; border-right: 2px solid #1c1c1c; background: repeating-linear-gradient(#2d2d2d 0 30px, #3a3a3a 30px 60px); overflow: hidden; }
.er { height: 30px; display: flex; color: #959595; overflow: hidden; }
.root { color: #ccc; }
.guide { width: 90px; height: 30px; margin: 0 4px 0 -1px; }
.root .guide { width: 60px; }
.hbar { display: flex; height: 29px; margin-top: 1px; width: 711px; }
.hthumb { width: 598px; background: linear-gradient(#4e4e4e, #383838); display: grid; place-items: center; border: 1px solid #222; }
.hbar i { width: 43px; background: #232323; }
.hbar b { width: 35px; height: 29px; border-right: 1px solid #111; } .hbar b svg { width: 12px; height: 13px; }
.fl2 { padding-left: 2px; margin-top: -1px; } .fl2 label { width: 61px; } .fl2 i { width: 612px; } .fl2 b { width: 35px; }
.desc { width: 697px; padding: 8px 0 0 1px; }
.pr { margin: 14px 0 0 2px; }
.pr span:nth-child(1) { width: 137px; } .pr span:nth-child(2) { width: 124px; } .pr span:nth-child(3) { width: 87px; } .pr span:nth-child(4) { width: 100px; } .pr span:nth-child(5) { width: 169px; }
.form { width: 694px; height: 1257px; margin-left: 2px; padding: 0 0 0 11px; }

.row { display: flex; align-items: center; height: 38px; margin-top: 9px; }
.row.r0 { margin-top: 8px; }
.row label { width: 204px; display: flex; align-items: center; flex: none; padding-bottom: 2px; }
.row .cb { margin-right: 17px; margin-top: 3px; }
.dis { color: #7c7c7c; }
.form .in { width: 467px; height: 38px; background: #2e2e2e; border: 2px solid #2a2a2a; color: #4c4c4c; overflow: hidden; flex: none; }
.form .mono { font: 28px/32px "Noto Sans Mono CJK SC", "DejaVu Sans Mono", monospace; padding-left: 2px; }
.form .lit { background: #131313; border-color: #252525; color: #f4f4f4; }
.form .small { width: 112px; } .form .cbk { width: 424px; } .form .half { width: 190px; }
.r2, .r7 { height: 46px; } .r3 { margin-top: 11px; } .r4 { margin-top: 15px; } .r5 { margin-top: 31px; } .r6, .r7 { margin-top: 12px; }
.sel { height: 46px; line-height: 42px; display: flex; align-items: flex-start; padding-left: 26px; border: 1px solid #292929; border-bottom-width: 2px; background: #343434; margin-left: 1px; }
.s1 { width: 271px; } .s2 { width: 362px; background: linear-gradient(#525252, #393939); border-color: #1c1c1c; }
.sel b { margin-left: auto; width: 23px; height: 100%; background: #2b2b2b; display: flex; flex-direction: column; gap: 2px; align-items: center; justify-content: center; color: #4c4c4c; }
.s2 b { background: #2e2e2e; color: #909090; }
.sel b svg { width: 12px; height: 13px; }
.slider { width: 355px; height: 38px; }
.py { width: 36px; height: 36px; margin-left: 5px; }
.frule { height: 2px; margin: 6px 9px 0 -1px; background: #4c4c4c; }
.lock { width: 28px; height: 34px; margin: 0 8px 0 7px; }
.lk2 { margin-left: 9px; }
.tags { height: 266px; align-items: flex-start; }
.tagw { width: 467px; padding-left: 9px; }
.tagt { display: flex; height: 191px; margin-left: 1px; }
.table { width: 429px; border: 1px solid #151515; border-top-width: 2px; border-right-color: #666; border-bottom-color: #666; background: repeating-linear-gradient(#2d2d2d 0 36px, #3a3a3a 36px 72px) 0 31px; }
.th { display: flex; height: 31px; background: linear-gradient(#3e3e3e, #262626); border-bottom: 1px solid #111; line-height: 29px; }
.th span { padding-left: 3px; border-left: 1px solid #111; }
.th span:first-child { width: 170px; }
.tb { height: 156px; display: flex; padding-left: 170px; }
.tb i { width: 1px; background: #151515; }
.tv { width: 28px; display: flex; flex-direction: column; color: #505050; }
.tv div, .tagh div { background: #373737; border: 1px solid #303030; display: grid; place-items: center; height: 119px; }
.tv b { height: 36px; display: grid; place-items: center; border: 1px solid #353535; background: #3d3d3d; }
.tv svg, .tagh svg { width: 12px; height: 12px; }
.tagh { display: flex; height: 29px; color: #505050; }
.tagh div { width: 359px; height: 29px; }
.tagh b { width: 36px; display: grid; place-items: center; border: 1px solid #353535; background: #3d3d3d; }
.tagb { display: flex; justify-content: space-between; padding: 0 2px 0 1px; }
.pm { display: flex; height: 38px; border: 1px solid #1d1d1d; border-bottom-width: 2px; }
.pm b { width: 36px; display: grid; place-items: center; border-left: 1px solid #555; background: #404040; }
.pm svg { width: 20px; height: 20px; }
.bit { width: 212px; height: 46px; line-height: 44px; text-align: center; color: #7c7c7c; background: #353535; border-bottom: 1px solid #2a2a2a; }
footer { display: flex; padding: 8px 0 0 1557px; }
button { font: inherit; color: #ccc; height: 47px; padding: 0 0 1px; border: 1px solid #1e1e1e; border-width: 1px 1px 2px; background: linear-gradient(#535353, #3a3a3a); }
.b1 { width: 127px; } .b2 { width: 145px; margin-left: 12px; } .b3 { width: 138px; margin-left: 88px; } .b4 { width: 137px; margin-left: 12px; }

/* pop-up menu */
.menu { position: absolute; left: 2840px; top: 170px; width: 490px; height: 968px; background: #393939; border: 1px solid #8a8a8a; border-right-color: #1c1c1c; border-bottom-color: #1c1c1c; font-size: 23.25px; }
.menu div { height: 44px; line-height: 42px; padding: 0 11px 2px 15px; display: flex; align-items: center; }
.menu .hl { background: #b36500; color: #fff; }
.menu svg { width: 18px; height: 20px; margin-left: auto; color: #999; }
.menu hr { margin: 0; border: 0; height: 26px; background: linear-gradient(#8a8a8a, #8a8a8a) 0 12px/100% 2px no-repeat; }
```
